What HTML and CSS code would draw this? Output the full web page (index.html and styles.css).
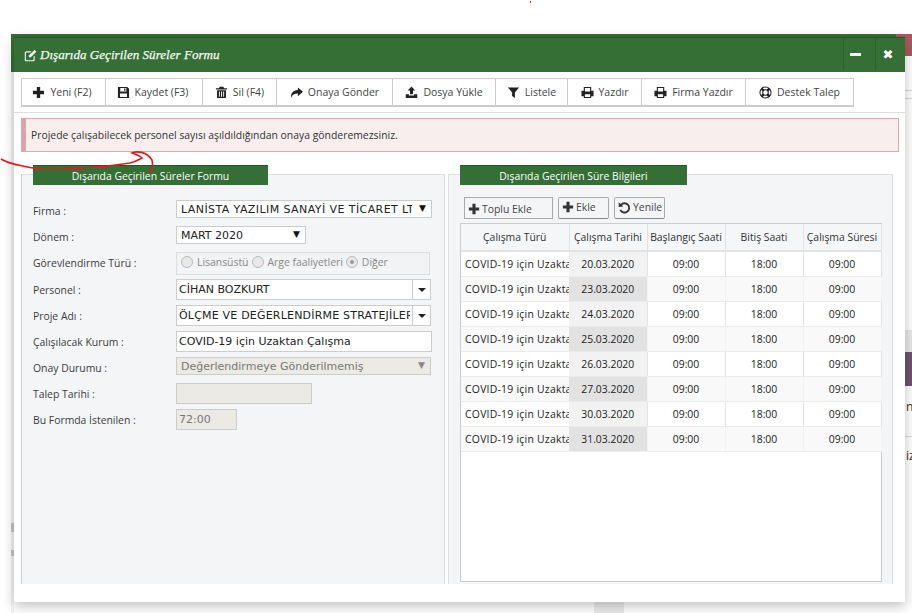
FILE: index.html
```html
<!DOCTYPE html>
<html lang="tr">
<head>
<meta charset="utf-8">
<title>Dışarıda Geçirilen Süreler Formu</title>
<link rel="stylesheet" href="styles.css">
</head>
<body>
<svg class="defs" width="0" height="0">
  <symbol id="i-plus" viewBox="0 0 14 14"><path d="M5.2 1h3.600v4.200H13v3.600H8.800V13H5.200V8.800H1V5.200h4.200z"/></symbol>
  <symbol id="i-save" viewBox="0 0 14 14"><path fill-rule="evenodd" d="M1 1h10l2 2v10H1zM3.500 2.200v3.600h6.500V2.200zM7.600 2.800h1.500v2.400H7.600zM3.200 8v3.900h7.600V8z"/></symbol>
  <symbol id="i-trash" viewBox="0 0 14 14"><path fill-rule="evenodd" d="M5 .8h4l.8 1.500H13v1.400H1V2.300h3.200zM2.200 4.500h9.600V13H2.200zM4.200 5.800v5.800h1V5.800zM6.500 5.800v5.800h1V5.800zM8.800 5.800v5.800h1V5.800z"/></symbol>
  <symbol id="i-share" viewBox="0 0 14 14"><path d="M8.500 1.500 14 6.200 8.500 11V8C5 8 2.500 9 1.200 12.800.6 8 3 4.500 8.500 4.200z"/></symbol>
  <symbol id="i-upload" viewBox="0 0 14 14"><path d="M7 .6 11 4.800H8.600V9H5.400V4.800H3zM.8 8.800h3.400v1.500h5.600V8.800h3.400V13H.8z"/></symbol>
  <symbol id="i-filter" viewBox="0 0 14 14"><path d="M1 1.500h12L8.500 7v6L5.500 10.800V7z"/></symbol>
  <symbol id="i-print" viewBox="0 0 14 14"><path fill-rule="evenodd" d="M3 1h8v4h2.500v6H11v2H3v-2H.5V5H3zM4.200 2.200V5.800h5.600V2.200zM4.200 9v2.900h5.600V9z"/></symbol>
  <symbol id="i-help" viewBox="0 0 14 14">
    <circle cx="7" cy="7" r="6" fill="none" stroke="currentColor" stroke-width="1.100"/>
    <circle cx="7" cy="7" r="3" fill="none" stroke="currentColor" stroke-width="1.100"/>
    <path d="M2.800 2.800 4.900 4.900M11.200 2.800 9.100 4.900M2.800 11.200 4.900 9.100M11.200 11.200 9.100 9.100" fill="none" stroke="currentColor" stroke-width="2.800"/>
  </symbol>
  <symbol id="i-edit" viewBox="0 0 14 14"><path d="M2.600 2.500H8L6.900 3.700H2.800a.8.800 0 0 0-.8.800v6.800c0 .4.400.8.800.8h6.700c.4 0 .8-.4.800-.8V8.400l1.200-1.200v4.300c0 1-.9 1.800-1.900 1.800H2.600c-1 0-1.800-.8-1.800-1.800V4.300c0-1 .8-1.800 1.800-1.800zM11.300 1l2 2-6 6H5.200V7z"/></symbol>
  <symbol id="i-undo" viewBox="0 0 14 14"><path fill="none" stroke="currentColor" stroke-width="2" d="M3.200 4.200A5 5 0 1 1 2.500 9.500"/><path d="M.8 1.400 5.800 6 .8 6.500z"/></symbol>
</svg>

<div class="backdrop-bar"></div>
<div class="backdrop-red"></div>
<div class="backdrop-strip"></div>
<div class="backdrop-mark backdrop-mark-a"></div>
<div class="backdrop-mark backdrop-mark-b"></div>
<div class="backdrop-rule backdrop-rule-a"></div>
<div class="backdrop-rule backdrop-rule-b"></div>
<div class="backdrop-rule backdrop-rule-c"></div>
<div class="backdrop-edge"></div>
<div class="backdrop-purple"></div>
<div class="backdrop-text backdrop-text-a">n</div>
<div class="backdrop-text backdrop-text-b">iz</div>
<div class="backdrop-foot"></div>

<main class="window">
  <header class="window-head">
    <h1 class="window-title"><svg class="ico ico-title"><use href="#i-edit"/></svg>Dışarıda Geçirilen Süreler Formu</h1>
    <div class="window-controls">
      <button class="win-btn win-btn-min"><span class="win-min"></span></button>
      <button class="win-btn win-btn-close"><span class="win-close">✖</span></button>
    </div>
  </header>

  <nav class="toolbar-wrap">
    <div class="toolbar">
      <button class="tool tool-shift w84"><svg class="ico"><use href="#i-plus"/></svg>Yeni (F2)</button>
      <button class="tool tool-shift w97"><svg class="ico"><use href="#i-save"/></svg>Kaydet (F3)</button>
      <button class="tool w74"><svg class="ico"><use href="#i-trash"/></svg>Sil (F4)</button>
      <button class="tool w116"><svg class="ico"><use href="#i-share"/></svg>Onaya Gönder</button>
      <button class="tool w103"><svg class="ico"><use href="#i-upload"/></svg>Dosya Yükle</button>
      <button class="tool w72"><svg class="ico"><use href="#i-filter"/></svg>Listele</button>
      <button class="tool w74"><svg class="ico"><use href="#i-print"/></svg>Yazdır</button>
      <button class="tool w104"><svg class="ico"><use href="#i-print"/></svg>Firma Yazdır</button>
      <button class="tool w108"><svg class="ico"><use href="#i-help"/></svg>Destek Talep</button>
    </div>
  </nav>

  <div class="alert">Projede çalışabilecek personel sayısı aşıldıldığından onaya gönderemezsiniz.</div>

  <div class="panels">
    <section class="panel panel-left">
      <h2 class="panel-title title-left">Dışarıda Geçirilen Süreler Formu</h2>
      <form class="form">
        <label class="lbl">Firma :</label>
        <div class="field sel w256"><span class="clip wide">LANİSTA YAZILIM SANAYİ VE TİCARET LTD. ŞTİ.</span><span class="tri">▼</span></div>

        <label class="lbl">Dönem :</label>
        <div class="field sel w130"><span class="clip">MART 2020</span><span class="tri">▼</span></div>

        <label class="lbl">Görevlendirme Türü :</label>
        <div class="radios">
          <div class="radios-inner">
            <span class="radio"></span><span class="radio-text">Lisansüstü</span>
            <span class="radio"></span><span class="radio-text">Arge faaliyetleri</span>
            <span class="radio radio-on"></span><span class="radio-text">Diğer</span>
          </div>
        </div>

        <label class="lbl">Personel :</label>
        <div class="field combo w255 tall"><span class="clip">CİHAN BOZKURT</span><span class="combo-btn"><i class="caret"></i></span></div>

        <label class="lbl">Proje Adı :</label>
        <div class="field combo w255 tall"><span class="clip mid">ÖLÇME VE DEĞERLENDİRME STRATEJİLERİ</span><span class="combo-btn"><i class="caret"></i></span></div>

        <label class="lbl">Çalışılacak Kurum :</label>
        <div class="field w256 tall"><span class="clip">COVID-19 için Uzaktan Çalışma</span></div>

        <label class="lbl">Onay Durumu :</label>
        <div class="field sel off w255"><span class="clip">Değerlendirmeye Gönderilmemiş</span><span class="tri">▼</span></div>

        <label class="lbl">Talep Tarihi :</label>
        <div class="field off w136 tall"></div>

        <label class="lbl">Bu Formda İstenilen :</label>
        <div class="field off w61 tall"><span class="clip">72:00</span></div>
      </form>
    </section>

    <section class="panel panel-right">
      <h2 class="panel-title title-right">Dışarıda Geçirilen Süre Bilgileri</h2>
      <div class="actions">
        <button class="act act-flat w89"><svg class="ico ico-act"><use href="#i-plus"/></svg>Toplu Ekle</button>
        <button class="act w51"><svg class="ico ico-act"><use href="#i-plus"/></svg>Ekle</button>
        <button class="act w51"><svg class="ico ico-act ico-undo"><use href="#i-undo"/></svg>Yenile</button>
      </div>
      <div class="grid-box">
        <table class="grid">
          <colgroup><col class="c1"><col class="c2"><col class="c2"><col class="c2"><col class="c2"></colgroup>
          <thead>
            <tr><th>Çalışma Türü</th><th>Çalışma Tarihi</th><th>Başlangıç Saati</th><th>Bitiş Saati</th><th>Çalışma Süresi</th></tr>
          </thead>
          <tbody>
            <tr><td class="t">COVID-19 için Uzaktan Çalışma</td><td class="d">20.03.2020</td><td>09:00</td><td>18:00</td><td>09:00</td></tr>
            <tr><td class="t">COVID-19 için Uzaktan Çalışma</td><td class="d">23.03.2020</td><td>09:00</td><td>18:00</td><td>09:00</td></tr>
            <tr><td class="t">COVID-19 için Uzaktan Çalışma</td><td class="d">24.03.2020</td><td>09:00</td><td>18:00</td><td>09:00</td></tr>
            <tr><td class="t">COVID-19 için Uzaktan Çalışma</td><td class="d">25.03.2020</td><td>09:00</td><td>18:00</td><td>09:00</td></tr>
            <tr><td class="t">COVID-19 için Uzaktan Çalışma</td><td class="d">26.03.2020</td><td>09:00</td><td>18:00</td><td>09:00</td></tr>
            <tr><td class="t">COVID-19 için Uzaktan Çalışma</td><td class="d">27.03.2020</td><td>09:00</td><td>18:00</td><td>09:00</td></tr>
            <tr><td class="t">COVID-19 için Uzaktan Çalışma</td><td class="d">30.03.2020</td><td>09:00</td><td>18:00</td><td>09:00</td></tr>
            <tr><td class="t">COVID-19 için Uzaktan Çalışma</td><td class="d">31.03.2020</td><td>09:00</td><td>18:00</td><td>09:00</td></tr>
          </tbody>
        </table>
      </div>
    </section>
  </div>
</main>

<svg class="scribble" width="160" height="30" viewBox="0 0 160 30">
  <path d="M1 9C8 14 20 15 33 18 45 21 65 19 83 18 100 17 118 15 130 13 135 12 138 10 142 8 140 6 135 4 132 3 137 1 146 1 152 10 153 14 153 19 148 22" fill="none" stroke="#e8191c" stroke-width="1.600"/>
</svg>
<div class="dot"></div>
</body>
</html>
```

FILE: styles.css
```css
* { box-sizing: border-box; }
html, body { margin: 0; width: 912px; height: 613px; overflow: hidden; background: #fff; }
body { position: relative; font: 10.400px "Open Sans", sans-serif; color: #333; }
.defs { position: absolute; }

.backdrop-bar { position: absolute; left: 11px; top: 34px; width: 885px; height: 38px; background: #356f35; }
.backdrop-red { position: absolute; left: 896px; top: 34px; width: 16px; height: 22px; background: #a85a5e; }
.backdrop-strip { position: absolute; left: 11px; top: 72px; width: 3px; height: 541px; background: #f3f3f3; }
.backdrop-mark { position: absolute; left: 11px; width: 3px; background: #c4c4c4; }
.backdrop-mark-a { top: 523px; height: 9px; }
.backdrop-mark-b { top: 550px; height: 6px; }
.backdrop-rule { position: absolute; left: 905px; width: 7px; height: 1px; background: #d6d6d6; }
.backdrop-rule-a { top: 90px; }
.backdrop-rule-b { top: 98px; }
.backdrop-rule-c { top: 436px; }
.backdrop-edge { position: absolute; left: 905px; top: 330px; width: 7px; height: 22px; background: #e9e9e9; }
.backdrop-purple { position: absolute; left: 905px; top: 352px; width: 7px; height: 34px; background: #6b5570; }
.backdrop-text { position: absolute; left: 906px; font-size: 12px; line-height: 14px; color: #333; }
.backdrop-text-a { top: 400px; }
.backdrop-text-b { top: 449px; }
.backdrop-foot { position: absolute; left: 594px; top: 602px; width: 30px; height: 11px; background: #ececec; }

.window {
  position: absolute; left: 14px; top: 37px; width: 891px; height: 565px;
  background: #fff; box-shadow: 0 4px 12px rgba(0, 0, 0, .25);
  display: flex; flex-direction: column;
}
.window-head {
  height: 35px; flex: none; background: #356f35; border-top: 1px solid #1f5a1f;
  display: flex; justify-content: space-between; color: #fff;
}
.window-title {
  margin: 0; padding-left: 10px; display: flex; align-items: center; gap: 3px;
  font: italic 400 13.100px "Liberation Serif", serif; color: #f4f8f4; -webkit-text-stroke: .25px #f4f8f4;
}
.ico { width: 13px; height: 13px; fill: currentColor; flex: none; }
.window-controls { display: flex; }
.win-btn {
  height: 32px; margin: 0; padding: 0 4px 0 0; border: 0; border-left: 1px solid #2e632e;
  background: none; color: #fff; display: flex; align-items: center; justify-content: center;
}
.win-btn-min { width: 32px; padding-right: 8px; }
.win-btn-close { width: 30px; padding-right: 5px; }
.win-min { width: 11px; height: 3px; background: #f2f6f2; }
.win-close { font: 13px "DejaVu Sans", sans-serif; color: #fff; }

.toolbar-wrap { height: 41px; flex: none; padding: 6px 7px 0; border-bottom: 1px solid #ddd; }
.toolbar { display: flex; height: 29px; width: max-content; border: 1px solid #ccc; border-bottom-width: 2px; background: #fff; }
.tool {
  display: flex; align-items: center; justify-content: center; gap: 5px; height: 26px; padding: 0;
  margin: 0; border: 0; border-right: 1px solid #ccc; background: #fff; color: #444; font: 10.500px "Open Sans", sans-serif;
}
.tool:last-child { border-right: 0; }
.tool .ico { color: #222; }
.tool-shift { padding-right: 3px; }
.w84 { width: 84px; } .w97 { width: 97px; } .w74 { width: 74px; } .w116 { width: 116px; }
.w103 { width: 103px; } .w72 { width: 72px; } .w104 { width: 104px; } .w108 { width: 107px; }

.alert {
  flex: none; height: 34px; margin: 5px 6px 0 7px; padding-left: 5px; display: flex; align-items: center;
  background: #f9eeee; border: 1px solid #dfa9b3; border-left: 5px solid #d9a3b0; color: #333;
}

.panels { flex: 1; display: flex; margin: 22px 0 18px 7px; gap: 3px; min-height: 0; }
.panel { position: relative; height: 410px; background: #f4f5f7; border: 1px solid #ddd; border-bottom: 0; }
.panel-left { width: 424px; border-left-color: #ccc; padding: 25px 0 0 11px; }
.panel-right { width: 445px; padding: 22px 0 0 11px; }
.panel-title {
  position: absolute; top: -10px; left: 11px; height: 20px; margin: 0; background: #356f35; border-top: 1px solid #1f5a1f;
  color: #fff; font: 400 10.400px/20px "Open Sans", sans-serif; text-align: center;
}
.title-left { width: 235px; }
.title-right { width: 227px; }

.form { display: grid; grid-template-columns: 143px 1fr; grid-template-rows: 26px 26px 27px repeat(6, 26px); align-items: start; }
.lbl { padding-top: 4px; color: #3c3c3c; line-height: 15px; }
.field {
  display: flex; align-items: center; height: 18px; border: 1px solid #ccc; background: #fff; color: #222;
  font: 11px "DejaVu Sans", sans-serif; padding-left: 4px;
}
.tall { height: 21px; padding-left: 2px; }
.clip { flex: 1; overflow: hidden; white-space: nowrap; min-width: 0; }
.wide { letter-spacing: .42px; }
.mid { letter-spacing: .2px; margin-right: 2px; }
.sel .clip { margin-right: 7px; }
.tri { flex: none; width: 12px; text-align: left; font-size: 9px; color: #111; margin-top: -3px; }
.off { background: #ebeae4; color: #777; }
.off .tri { color: #888; }
.w256 { width: 256px; } .w130 { width: 130px; } .w255 { width: 255px; } .w136 { width: 136px; } .w61 { width: 61px; }
.combo-btn { flex: none; width: 18px; height: 100%; border-left: 1px solid #ccc; display: flex; align-items: center; justify-content: center; }
.caret { width: 0; height: 0; border: 4px solid transparent; border-top-color: #222; border-bottom: 0; }
.radios {
  width: 254px; height: 23px; background: #f2f3f5; border: 1px solid #ddd; padding: 1px 0 0 4px;
  color: #888; font-size: 10.400px; white-space: nowrap;
}
.radios-inner { display: flex; align-items: center; width: 210px; height: 16px; border-bottom: 1px solid #fafafa; }
.radio { width: 12px; height: 12px; border-radius: 50%; border: 1px solid #bbb; background: #e8e8e8; flex: none; margin-right: 4px; position: relative; }
.radio-text { margin-right: 3px; }
.radio-on::after { content: ""; position: absolute; left: 3px; top: 3px; width: 4px; height: 4px; border-radius: 50%; background: #999; }

.actions { display: flex; height: 26px; gap: 5px; padding-left: 4px; }
.act {
  display: flex; align-items: center; gap: 2px; height: 22px; margin: 0; padding: 0 0 2px 3px; background: #f4f5f7;
  border: 1px solid #aaa; border-bottom-color: #888; border-radius: 2px; color: #444; font: 10.400px "Open Sans", sans-serif; white-space: nowrap;
}
.act-flat { border-radius: 0; border-color: #aaa; padding: 1px 0 0 3px; }
.w89 { width: 89px; } .w51 { width: 51px; }
.ico-act { width: 12px; height: 12px; color: #333; }
.ico-undo { width: 13px; height: 13px; }

.grid-box { width: 422px; height: 359px; background: #fff; border: 1px solid #ccc; }
.grid { border-collapse: collapse; table-layout: fixed; width: 420px; font-size: 10.400px; color: #222; }
.c1 { width: 108px; } .c2 { width: 78px; }
.grid th { height: 27px; padding: 0 0 1px; background: #f5f6f8; font-weight: 400; border-right: 1px solid #e2e2e2; border-bottom: 2px solid #e2e2e2; color: #333; text-align: center; white-space: nowrap; }
.grid td { height: 25px; padding: 0; text-align: center; border-right: 1px solid #e2e2e2; border-bottom: 1px solid #ececec; white-space: nowrap; overflow: hidden; background: #fff; }
.grid tbody tr:nth-child(even) td { background: #f9f9f9; border-right-color: #f2f2f2; }
.grid td.t { text-align: left; padding-left: 4px; border-right: 0; letter-spacing: .25px; }
.grid td.d { background: #f2f2f2; }
.grid tbody tr:nth-child(even) td.d { background: #e2e2e2; }

.scribble { position: absolute; left: 0; top: 150px; pointer-events: none; }
.dot { position: absolute; left: 530px; top: 1px; width: 1px; height: 2px; background: #e8191c; }
```
